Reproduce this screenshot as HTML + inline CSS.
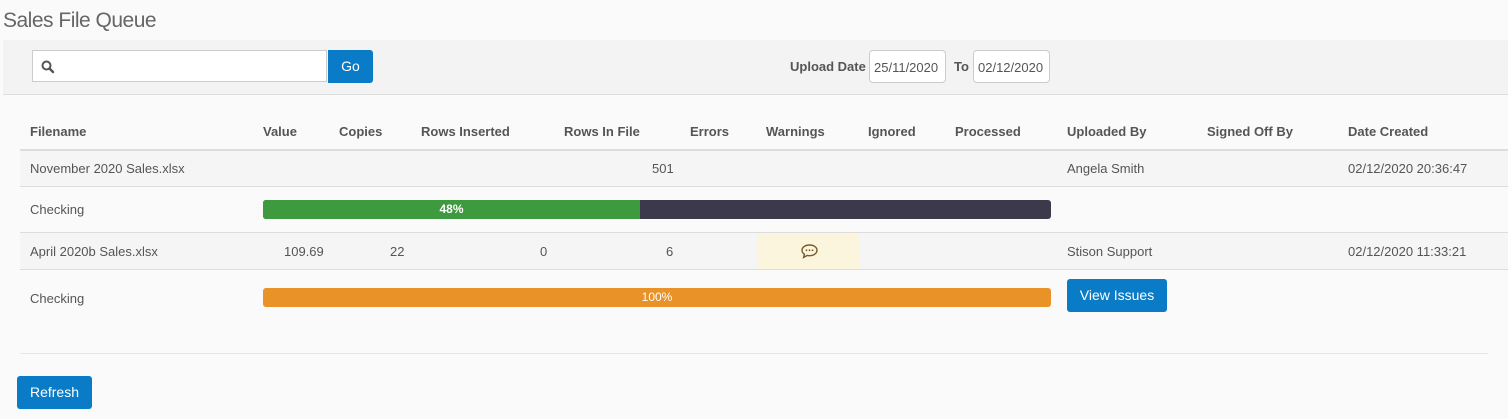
<!DOCTYPE html>
<html><head><style>
body{margin:0;width:1508px;height:419px;background:#fafafa;font-family:"Liberation Sans",Arial,sans-serif;position:relative;overflow:hidden;color:#555}
.a{position:absolute;white-space:nowrap}
.h{font-weight:bold;font-size:13px;color:#555;top:124px}
.t{font-size:13px;color:#555}
.btn{background:#0a7bc6;color:#fff;border-radius:3px;font-size:14px;text-align:center}
</style></head><body>
<div class="a" style="left:3px;top:9px;font-size:21px;color:#666;letter-spacing:-0.5px">Sales File Queue</div>
<div class="a" style="left:3px;top:40px;width:1505px;height:54px;background:#f3f3f3;border-bottom:1px solid #ddd"></div>
<div class="a" style="left:32px;top:50px;width:295px;height:32px;background:#fff;border:1px solid #ccc;box-sizing:border-box"></div>
<svg class="a" style="left:41px;top:60px" width="14" height="14" viewBox="0 0 14 14"><circle cx="5.5" cy="5.5" r="4" fill="none" stroke="#555" stroke-width="2"/><path d="M8.5 8.5L12 12" stroke="#555" stroke-width="2.4" stroke-linecap="round"/></svg>
<div class="a btn" style="left:328px;top:50px;width:45px;height:33px;line-height:33px;border-radius:0 3px 3px 0">Go</div>
<div class="a" style="left:790px;top:59px;font-size:13px;font-weight:bold;color:#555">Upload Date</div>
<div class="a t" style="left:869px;top:50px;width:77px;height:33px;line-height:33px;background:#fff;border:1px solid #ccc;border-radius:4px;box-sizing:border-box;padding-left:4px;color:#555">25/11/2020</div>
<div class="a" style="left:954px;top:59px;font-size:13px;font-weight:bold;color:#555">To</div>
<div class="a t" style="left:973px;top:50px;width:77px;height:33px;line-height:33px;background:#fff;border:1px solid #ccc;border-radius:4px;box-sizing:border-box;padding-left:4px;color:#555">02/12/2020</div>

<div class="a h" style="left:30px">Filename</div>
<div class="a h" style="left:263px">Value</div>
<div class="a h" style="left:339px">Copies</div>
<div class="a h" style="left:421px">Rows Inserted</div>
<div class="a h" style="left:564px">Rows In File</div>
<div class="a h" style="left:690px">Errors</div>
<div class="a h" style="left:766px">Warnings</div>
<div class="a h" style="left:868px">Ignored</div>
<div class="a h" style="left:955px">Processed</div>
<div class="a h" style="left:1067px">Uploaded By</div>
<div class="a h" style="left:1207px">Signed Off By</div>
<div class="a h" style="left:1348px">Date Created</div>

<div class="a" style="left:20px;top:149px;width:1488px;height:2px;background:#ddd"></div>
<div class="a" style="left:20px;top:151px;width:1488px;height:35px;background:#f5f5f5;border-bottom:1px solid #ddd"></div>
<div class="a" style="left:20px;top:232px;width:1488px;height:38px;background:#f5f5f5;border-top:1px solid #ddd;border-bottom:1px solid #ddd;box-sizing:border-box"></div>
<div class="a" style="left:757px;top:233px;width:103px;height:36px;background:#fcf5dd"></div>

<div class="a t" style="left:30px;top:161px">November 2020 Sales.xlsx</div>
<div class="a t" style="left:652px;top:161px">501</div>
<div class="a t" style="left:1067px;top:161px">Angela Smith</div>
<div class="a t" style="left:1348px;top:161px">02/12/2020 20:36:47</div>

<div class="a t" style="left:30px;top:202px">Checking</div>
<div class="a" style="left:263px;top:200px;width:788px;height:19px;background:#3c3a4a;border-radius:3px;overflow:hidden"><div style="width:377px;height:19px;background:#3e9a3e;color:#fff;font-size:12px;font-weight:bold;text-align:center;line-height:19px">48%</div></div>

<div class="a t" style="left:30px;top:244px">April 2020b Sales.xlsx</div>
<div class="a t" style="left:284px;top:244px">109.69</div>
<div class="a t" style="left:390px;top:244px">22</div>
<div class="a t" style="left:540px;top:244px">0</div>
<div class="a t" style="left:666px;top:244px">6</div>
<svg class="a" style="left:800px;top:243px" width="19" height="17" viewBox="0 0 19 17"><path d="M9.5 2C5 2 2 4.5 2 7.3c0 1.7 1 3 2.4 3.9L3.6 14.5l3.6-2.1c.7.2 1.5.3 2.3.3 4.5 0 7.5-2.5 7.5-5.4S14 2 9.5 2z" fill="none" stroke="#7a5a2a" stroke-width="1.4"/><circle cx="6.5" cy="7.3" r=".9" fill="#7a5a2a"/><circle cx="9.5" cy="7.3" r=".9" fill="#7a5a2a"/><circle cx="12.5" cy="7.3" r=".9" fill="#7a5a2a"/></svg>
<div class="a t" style="left:1067px;top:244px">Stison Support</div>
<div class="a t" style="left:1348px;top:244px">02/12/2020 11:33:21</div>

<div class="a t" style="left:30px;top:291px">Checking</div>
<div class="a" style="left:263px;top:288px;width:788px;height:19px;background:#e99228;border-radius:3px;color:#fff;font-size:12px;text-align:center;line-height:19px">100%</div>
<div class="a btn" style="left:1067px;top:279px;width:100px;height:33px;line-height:33px">View Issues</div>

<div class="a" style="left:20px;top:353px;width:1468px;height:1px;background:#e6e6e6"></div>
<div class="a btn" style="left:17px;top:376px;width:75px;height:33px;line-height:33px">Refresh</div>
</body></html>
